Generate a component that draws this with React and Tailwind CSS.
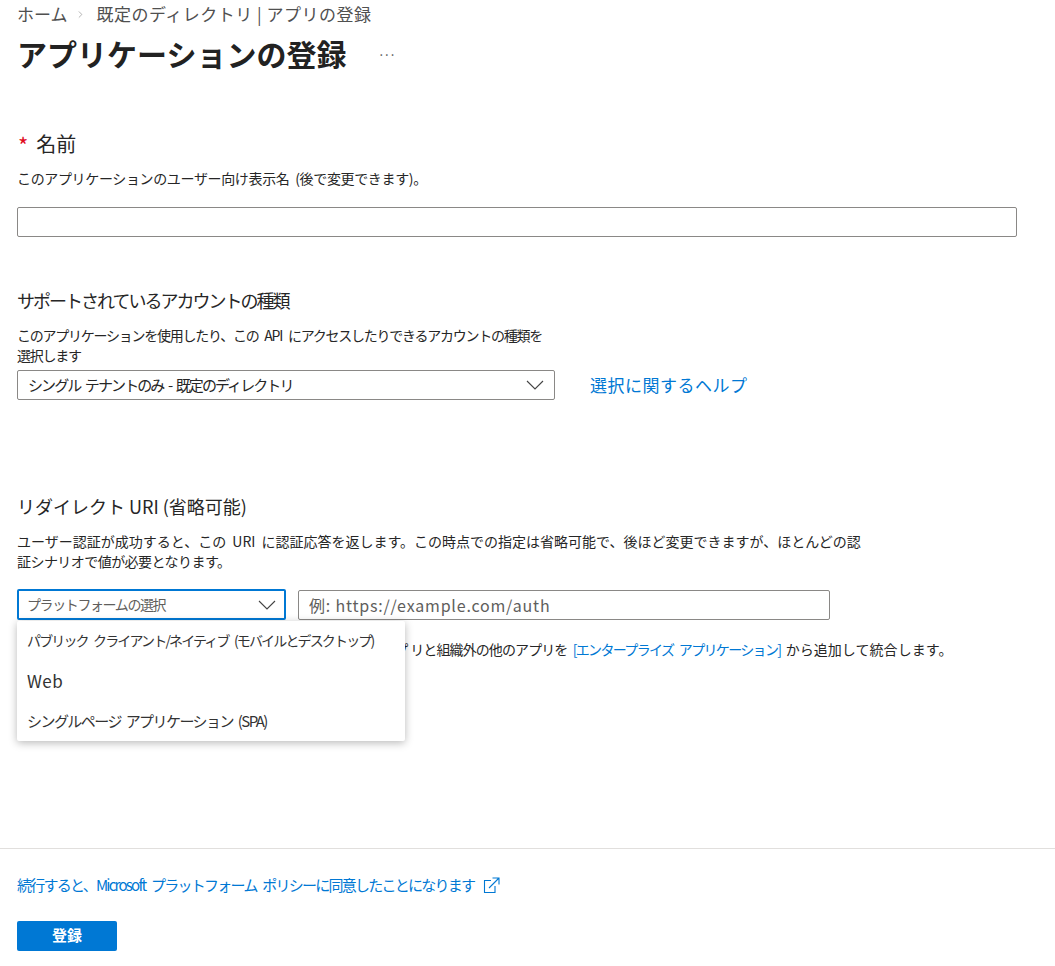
import { ChevronRight } from "lucide-react";

const font = { fontFamily: '"Noto Sans CJK JP", sans-serif' };

const Chevron = () => (
  <svg width="18" height="10" viewBox="0 0 18 10" fill="none" stroke="#444" strokeWidth="1.1">
    <path d="M1 1l8 8 8-8" />
  </svg>
);

const ExternalLink = () => (
  <svg width="18" height="17" viewBox="0 0 18 17" fill="none" stroke="#0078d4" strokeWidth="1.1" className="ml-[8px]">
    <path d="M9 3.5H2.5V15.5H13V9" />
    <path d="M7 11L16.5 1.5M10.5 1H17V7.5" />
  </svg>
);

const SelectBox = ({ label, className, textClass }) => (
  <div className={`flex items-center justify-between rounded-[2px] bg-white ${className}`}>
    <span className={`whitespace-nowrap ${textClass}`}>{label}</span>
    <Chevron />
  </div>
);

export default function App() {
  return (
    <div className="relative h-[966px] w-[1055px] overflow-hidden bg-white text-[#262626]" style={font}>
      <div className="px-[17px]">
        {/* Breadcrumb */}
        <div className="flex h-[28px] items-center text-[17px] leading-[26px] text-[#505050]">
          <span>ホーム</span>
          <ChevronRight size={11} strokeWidth={1.2} className="ml-[7px] mr-[11px] text-[#777]" />
          <span className="tracking-[0.5px]">既定のディレクトリ | アプリの登録</span>
        </div>

        <div className="flex h-[50px] items-center">
          <h1 className="text-[30px] font-bold leading-[50px] text-[#222]">アプリケーションの登録</h1>
          <span className="mb-[6px] ml-[33px] text-[13px] leading-none tracking-[2px] text-[#555]">...</span>
        </div>

        {/* Name */}
        <div className="mt-[52px] flex h-[28px] items-center text-[20px]">
          <span className="ml-[1px] mr-[8px] text-[22px] text-[#e00b1c]">*</span>
          <span>名前</span>
        </div>
        <p className="mt-[10px] h-[20px] whitespace-nowrap text-[14px] leading-[20px] tracking-[-0.35px] [word-spacing:3px]">
          このアプリケーションのユーザー向け表示名 (後で変更できます)。
        </p>
        <input className="mt-[19px] block h-[30px] w-[1000px] rounded-[2px] border border-[#8a8886] bg-white" />

        {/* Account types */}
        <h2 className="mt-[49px] h-[28px] text-[18px] font-normal leading-[28px] tracking-[-2px]">サポートされているアカウントの種類</h2>
        <p className="mt-[11px] w-[560px] text-[14px] leading-[20px] tracking-[-1.25px] [word-spacing:4px]">
          このアプリケーションを使用したり、この API にアクセスしたりできるアカウントの種類を
          <br />
          選択します
        </p>
        <div className="mt-[5px] flex items-center">
          <SelectBox
            label="シングル テナントのみ - 既定のディレクトリ"
            className="h-[30px] w-[538px] border border-[#8a8886] pl-[10px] pr-[10px]"
            textClass="text-[15px] tracking-[-1.9px] [word-spacing:3px]"
          />
          <a className="ml-[35px] text-[17px] tracking-[0.5px] text-[#0078d4]">選択に関するヘルプ</a>
        </div>

        {/* Redirect URI */}
        <h2 className="mt-[92px] h-[28px] text-[18px] font-normal leading-[28px]">リダイレクト URI (省略可能)</h2>
        <p className="mt-[11px] w-[880px] text-[14px] leading-[20px] [word-spacing:3px]">
          ユーザー認証が成功すると、この URI に認証応答を返します。この時点での指定は省略可能で、後ほど変更できますが、ほとんどの認
          <br />
          <span className="tracking-[-0.55px]">証シナリオで値が必要となります。</span>
        </p>
        <div className="mt-[18px] flex items-center gap-[12px]">
          <SelectBox
            label="プラットフォームの選択"
            className="h-[31px] w-[269px] border-2 border-[#0078d4] pl-[8px] pr-[8px]"
            textClass="text-[14px] tracking-[-1.4px] text-[#605e5c]"
          />
          <input
            placeholder="例: https://example.com/auth"
            className="h-[30px] w-[532px] rounded-[2px] border border-[#8a8886] bg-white px-[10px] text-[16px] tracking-[0.8px] placeholder:text-[#605e5c]"
          />
        </div>
        <p className="mt-[19px] h-[20px] whitespace-nowrap text-[14px] leading-[20px] tracking-[-0.9px] [word-spacing:3px]">
          <span className="tracking-[2.1px]">ここで作業中のアプリを登録します。ギャラリー アプ</span>リと組織外の他のアプリを{" "}
          <span className="tracking-[-1.65px] text-[#0078d4] [word-spacing:4px]">[エンタープライズ アプリケーション]</span>{" "}
          <span className="tracking-[0.05px]">から追加して統合します。</span>
        </p>
      </div>

      {/* Platform dropdown menu */}
      <div className="absolute left-[17px] top-[621px] w-[388px] rounded-[2px] bg-white py-[1px] text-[#333] shadow-[0_2px_8px_rgba(0,0,0,0.28)]">
        <div className="flex h-[37px] items-center whitespace-nowrap pl-[10px] text-[14px] tracking-[-1.85px] [word-spacing:4px]">パブリック クライアント/ネイティブ (モバイルとデスクトップ)</div>
        <div className="flex h-[44px] items-center pl-[10px] text-[17px] tracking-[0.4px]">Web</div>
        <div className="flex h-[37px] items-center whitespace-nowrap pl-[10px] text-[15px] tracking-[-1.55px] [word-spacing:3px]">シングルページ アプリケーション (SPA)</div>
      </div>

      {/* Footer */}
      <div className="absolute bottom-0 left-0 h-[118px] w-full border-t border-[#e1dfdd] px-[17px]">
        <div className="mt-[23px] flex h-[26px] items-center text-[15px] text-[#0078d4]">
          <span className="tracking-[-1.75px] [word-spacing:4px]">続行すると、Microsoft プラットフォーム ポリシーに同意したことになります</span>
          <ExternalLink />
        </div>
        <button className="mt-[23px] block h-[30px] w-[100px] rounded-[2px] bg-[#0078d4] pb-[2px] text-[15px] font-bold text-white">登録</button>
      </div>
    </div>
  );
}
